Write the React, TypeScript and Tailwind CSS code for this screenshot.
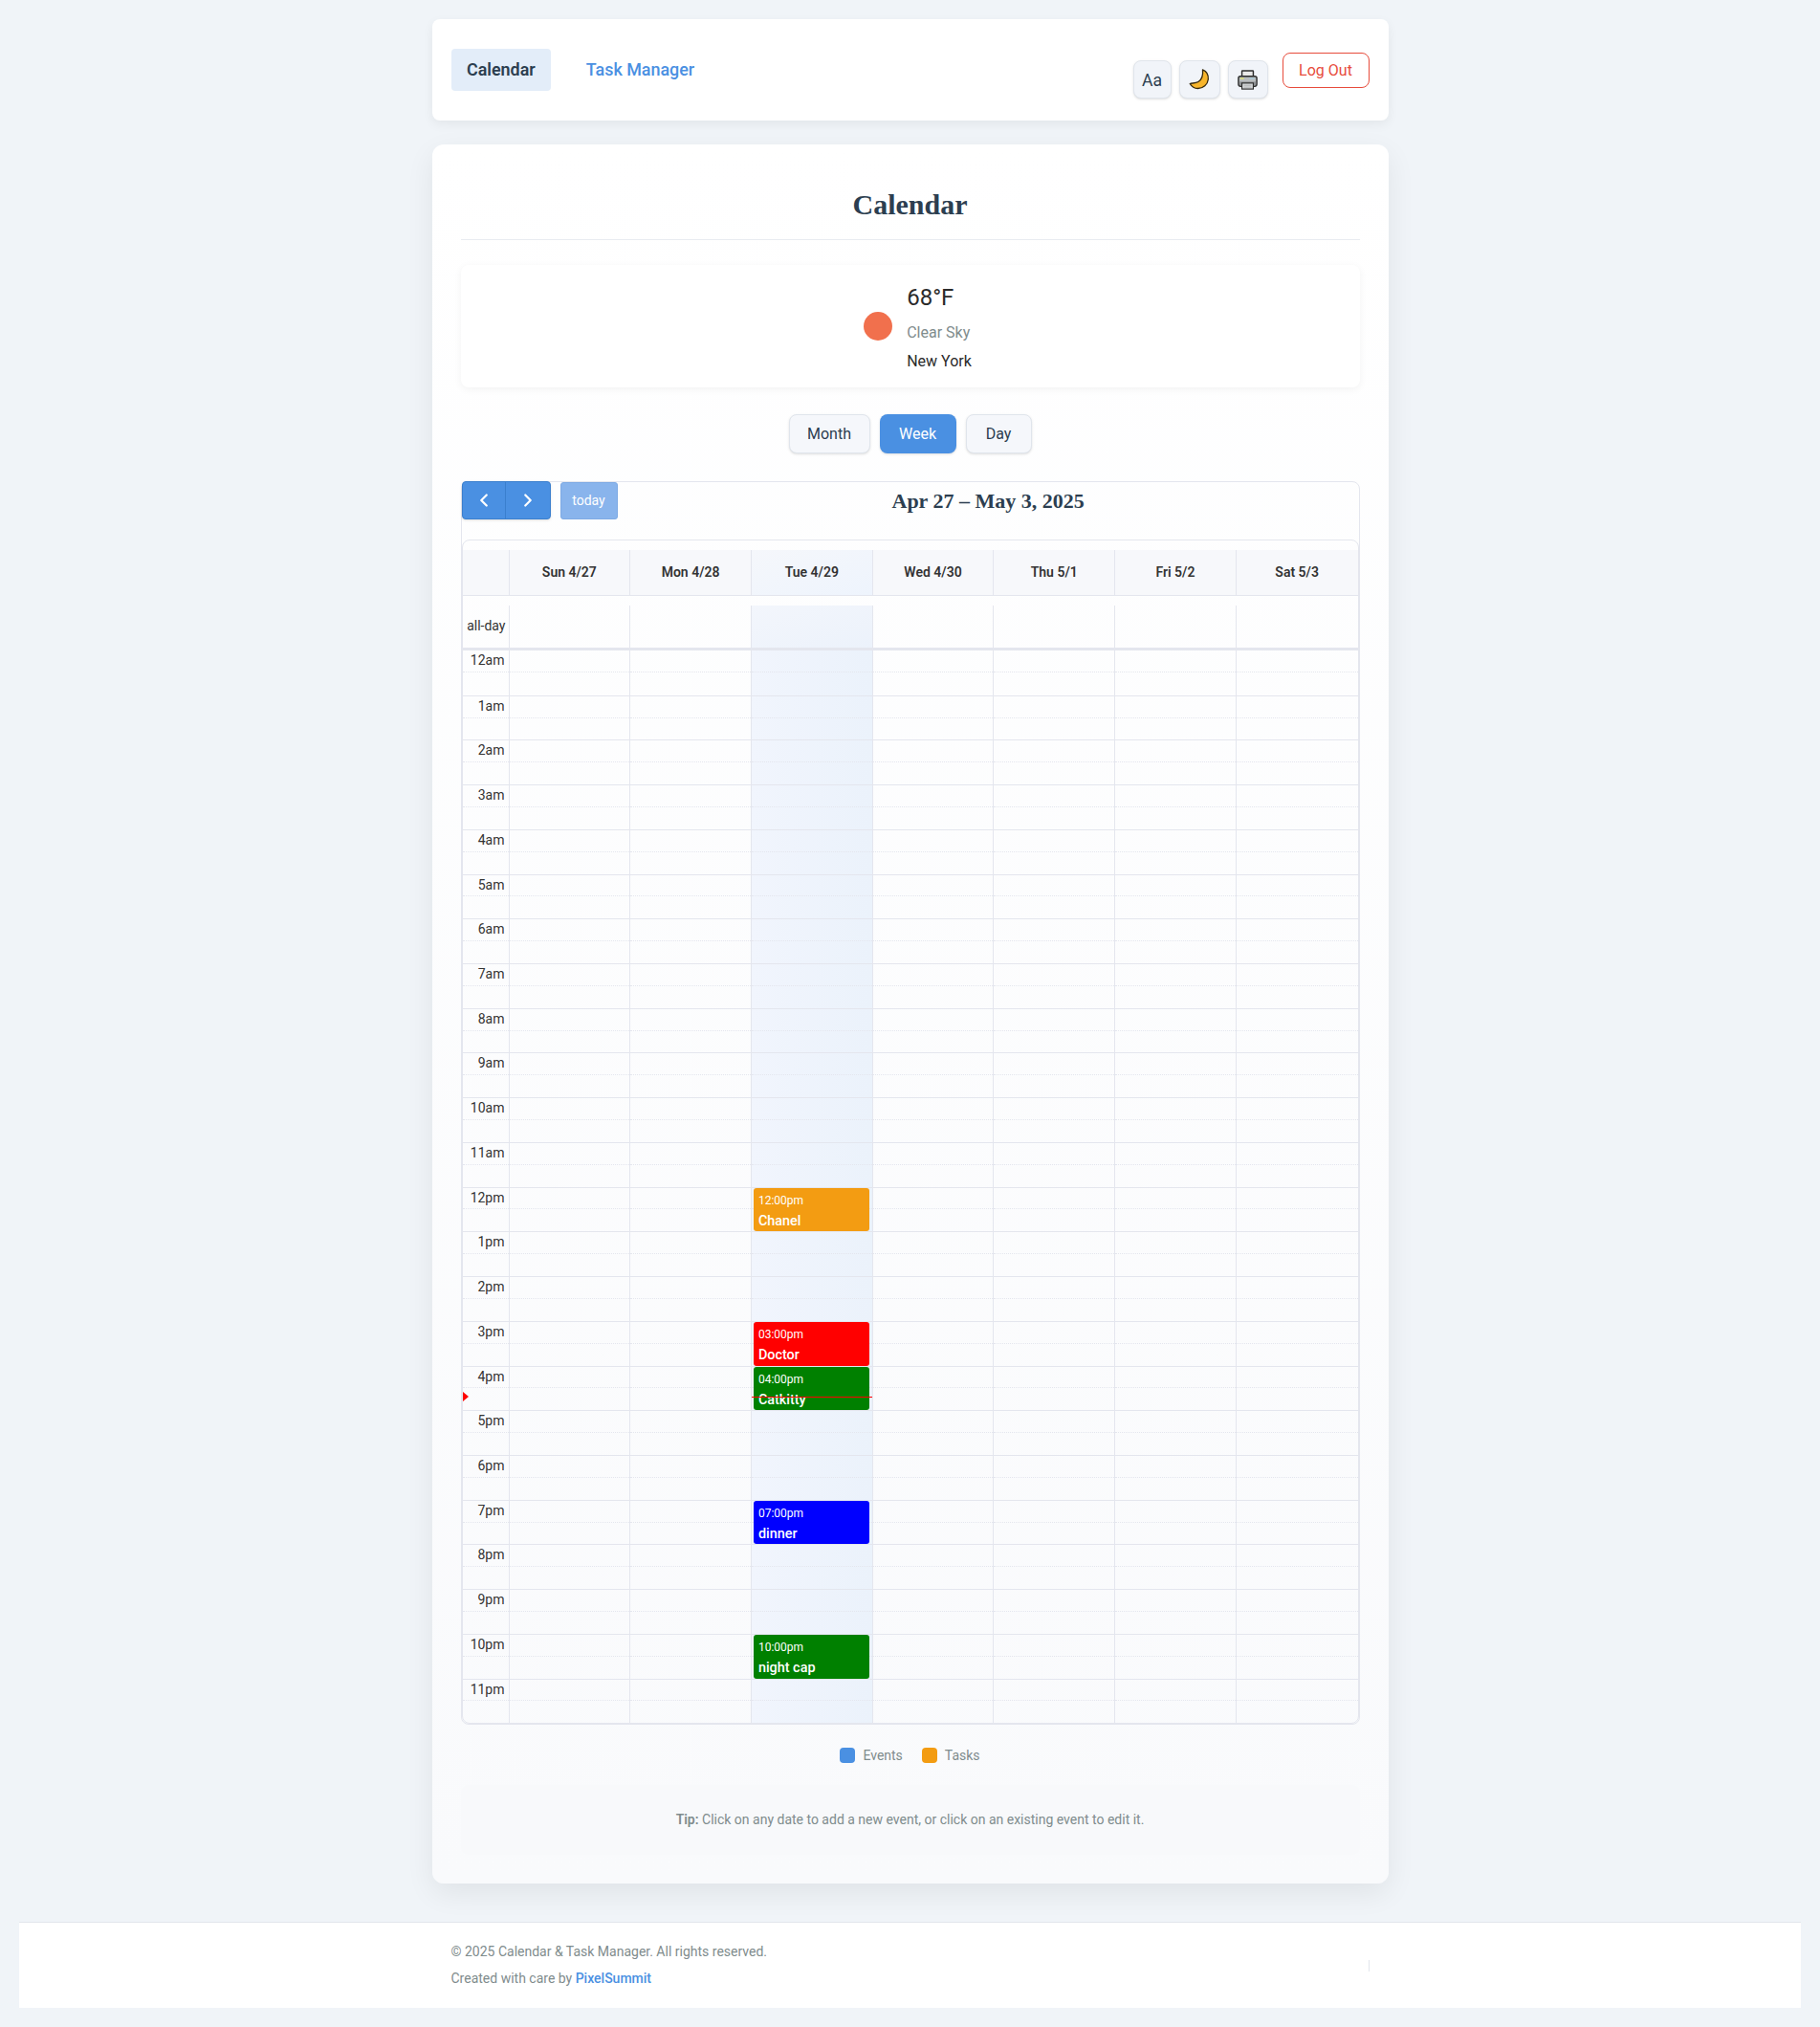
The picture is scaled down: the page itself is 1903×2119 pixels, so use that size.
import React from 'react';
import { ChevronLeft, ChevronRight } from 'lucide-react';

const days = ['Sun 4/27', 'Mon 4/28', 'Tue 4/29', 'Wed 4/30', 'Thu 5/1', 'Fri 5/2', 'Sat 5/3'];
const hours = ['12am', '1am', '2am', '3am', '4am', '5am', '6am', '7am', '8am', '9am', '10am', '11am', '12pm', '1pm', '2pm', '3pm', '4pm', '5pm', '6pm', '7pm', '8pm', '9pm', '10pm', '11pm'];

const events: Record<string, { time: string; title: string; color: string }> = {
  '12pm': { time: '12:00pm', title: 'Chanel', color: 'bg-[#f39c12]' },
  '3pm': { time: '03:00pm', title: 'Doctor', color: 'bg-[#ff0000]' },
  '4pm': { time: '04:00pm', title: 'Catkitty', color: 'bg-[#008000]' },
  '7pm': { time: '07:00pm', title: 'dinner', color: 'bg-[#0000ff]' },
  '10pm': { time: '10:00pm', title: 'night cap', color: 'bg-[#008000]' },
};

const MoonIcon = () => (
  <svg width="22" height="22" viewBox="0 0 22 22">
    <path d="M14.5 0.8 C18.5 2.5 20.8 6.5 20.3 11 C19.7 16.5 15 20.5 9.5 20.5 C6 20.5 3 18.5 1.2 15.5 C3.5 14.8 7 15.2 10 13.5 C13.5 11.5 15 6 14.5 0.8 Z" fill="#f7b52c" stroke="#35290f" strokeWidth="1.3" strokeLinejoin="round" />
  </svg>
);

const PrinterIcon = () => (
  <svg width="23" height="23" viewBox="0 0 24 24">
    <rect x="5.8" y="2" width="12.4" height="8" rx="0.5" fill="#e9e9e9" stroke="#2c2c2c" strokeWidth="1.5" />
    <rect x="2" y="8" width="20" height="11" rx="2.2" fill="#b9bdbf" stroke="#2c2c2c" strokeWidth="1.5" />
    <rect x="4" y="9.8" width="4" height="1.3" fill="#e7ea6a" />
    <rect x="14" y="9.8" width="5.5" height="1.3" fill="#a6cbdc" />
    <rect x="3" y="14" width="18" height="4" fill="#8e9194" />
    <rect x="5.8" y="15.5" width="12.4" height="6.5" fill="#d6d8d9" stroke="#2c2c2c" strokeWidth="1.2" />
    <path d="M8 18 H16 M8 20 H16" stroke="#a8aaac" strokeWidth="0.8" />
  </svg>
);

const gridLine = 'border-[#e4e6ee]';

const App = () => {
  return (
    <div className="min-h-[2119px] bg-[#f0f4f8] p-5 font-['Roboto',sans-serif] text-[#2c3e50]">
      <div className="mx-auto w-[1000px]">
        {/* Top nav */}
        <nav className="flex h-[106px] items-start justify-between rounded-lg bg-white px-5 pt-[31px] shadow-[0_4px_12px_rgba(0,0,0,0.06)]">
          <div className="flex items-center gap-[20px]">
            <a className="flex h-11 items-center rounded bg-[#e3edf9] px-[16.5px] text-[17.92px] font-semibold text-[#2c3e50]">Calendar</a>
            <a className="flex h-11 items-center px-[16.5px] text-[17.92px] font-medium text-[#4a90e2]">Task Manager</a>
          </div>
          <div className="flex items-start">
            <div className="mt-[12px] flex items-center gap-2">
              <button className="flex h-10 w-10 items-center justify-center rounded-lg border border-[#e0e5ec] bg-[#f1f4f9] pt-[2px] text-[17.6px] shadow-sm">Aa</button>
              <button className="flex h-10 w-[43px] items-center justify-center rounded-lg border border-[#e0e5ec] bg-[#f1f4f9] shadow-sm"><MoonIcon /></button>
              <button className="flex h-10 w-[42px] items-center justify-center rounded-lg border border-[#e0e5ec] bg-[#f1f4f9] shadow-sm"><PrinterIcon /></button>
            </div>
            <button className="ml-[15px] mt-[4px] flex h-[37px] w-[91px] items-center justify-center rounded-lg border border-[#e74c3c] bg-white text-[16px] text-[#e74c3c]">Log Out</button>
          </div>
        </nav>

        {/* Main card */}
        <main className="mt-[25px] h-[1818px] rounded-xl bg-gradient-to-b from-white to-[#f9fafc] px-[30px] pt-[40px] shadow-[0_10px_30px_rgba(0,0,0,0.07)]">
          <h1 className="h-[60px] border-b border-[#e8ebf0] text-center font-['Liberation_Serif',serif] text-[30px] font-bold leading-[46px] text-[#2c3e50]">Calendar</h1>

          {/* Weather */}
          <div className="mt-[26px] flex h-[128px] items-center justify-center gap-[15px] rounded-lg bg-white pl-4 shadow-[0_2px_8px_rgba(0,0,0,0.05)]">
            <div className="h-[30px] w-[30px] rounded-full bg-[#f1704d]"></div>
            <div className="flex flex-col">
              <span className="text-[24px] leading-[36px] text-[#2b2b2b]">68°F</span>
              <span className="mt-[4px] text-[16px] leading-[30px] text-[#7f8c8d]">Clear Sky</span>
              <span className="-mb-[3px] text-[16px] leading-[30px] text-[#2b2b2b]">New York</span>
            </div>
          </div>

          {/* View switch */}
          <div className="mt-7 flex justify-center gap-[10px]">
            <button className="h-[41px] w-[85px] rounded-lg border border-[#e0e5ec] bg-[#f5f7fb] text-[16px] shadow-sm">Month</button>
            <button className="h-[41px] w-[80px] rounded-lg bg-[#4a90e2] text-[16px] text-white shadow-sm">Week</button>
            <button className="h-[41px] w-[69px] rounded-lg border border-[#e0e5ec] bg-[#f5f7fb] text-[16px] shadow-sm">Day</button>
          </div>

          {/* Calendar */}
          <div className={`mt-[29px] h-[1300px] rounded-lg border ${gridLine}`}>
            <div className="relative flex h-[60px] items-start">
              <div className="-mt-px flex h-10 w-[93px] overflow-hidden rounded border border-[#3a7fce] bg-[#4a90e2] text-white shadow-sm">
                <div className="flex w-1/2 items-center justify-center border-r border-[#3a7fce]"><ChevronLeft size={22} strokeWidth={2.4} /></div>
                <div className="flex w-1/2 items-center justify-center"><ChevronRight size={22} strokeWidth={2.4} /></div>
              </div>
              <div className="ml-[10px] flex h-[39px] w-[60px] items-center justify-center rounded-[3px] border border-[#7eaae4] bg-[#89b4ec] text-[14px] text-white">today</div>
              <h2 className="ml-[287px] mt-[5px] font-['Liberation_Serif',serif] text-[22px] font-bold leading-[30px] text-[#2c3e50]">Apr 27 – May 3, 2025</h2>
            </div>

            <div className={`overflow-hidden rounded-lg border ${gridLine}`}>
              {/* Day heads */}
              <div className="pt-[10px]">
                <div className={`grid h-[48px] grid-cols-[49px_repeat(7,1fr)] border-b ${gridLine} bg-[#f7f8fb]`}>
                  <div className={`border-r ${gridLine}`}></div>
                  {days.map((d, i) => (
                    <div key={d} className={`flex items-center justify-center border-r last:border-r-0 ${gridLine} text-[14px] font-semibold text-[#333] ${i === 2 ? 'bg-gradient-to-br from-[#f5f7fb] to-[#eef4fd]' : ''}`}>{d}</div>
                  ))}
                </div>
              </div>

              {/* All-day row */}
              <div className={`border-b-[3px] pt-[10px] ${gridLine}`}>
                <div className="grid h-[44px] grid-cols-[49px_repeat(7,1fr)]">
                  <div className={`flex items-center justify-end border-r ${gridLine} pb-[2px] pr-[3px] text-[14px] text-[#333]`}>all-day</div>
                  {days.map((d, i) => (
                    <div key={d} className={`border-r last:border-r-0 ${gridLine} ${i === 2 ? 'bg-gradient-to-br from-[#f3f6fc] to-[#ecf2fb]' : ''}`}></div>
                  ))}
                </div>
              </div>

              {/* Time rows */}
              {hours.map((h, rowIdx) => (
                <div key={h} className={`grid h-[46.72px] grid-cols-[49px_repeat(7,1fr)] ${rowIdx > 0 ? `border-t ${gridLine}` : ''}`}>
                  <div className={`relative border-r ${gridLine}`}>
                    <div className="h-1/2 border-b border-dotted border-[#e4e6ee] pr-[4px] text-right text-[14px] leading-[20px] text-[#333]">{h}</div>
                    {h === '4pm' && (
                      <div className="absolute left-0 top-[26px] h-0 w-0 border-y-[5px] border-l-[6px] border-y-transparent border-l-[#ff0000]"></div>
                    )}
                  </div>
                  {days.map((d, i) => (
                    <div key={d} className={`relative border-r last:border-r-0 ${gridLine} ${i === 2 ? 'bg-gradient-to-r from-[#f1f5fd] to-[#ebf2fb]' : ''}`}>
                      <div className="h-1/2 border-b border-dotted border-[#e4e6ee]"></div>
                      {i === 2 && events[h] && (
                        <div className={`absolute bottom-0 left-[2px] right-[3px] top-0 z-10 rounded-[3px] ${events[h].color} px-[5px] text-white`}>
                          <div className="mt-[4.5px] text-[12px] leading-[18px]">{events[h].time}</div>
                          <div className="mt-[4px] text-[14.4px] font-medium leading-[18px]">{events[h].title}</div>
                        </div>
                      )}
                      {i === 2 && h === '4pm' && (
                        <div className="absolute inset-x-0 top-[31px] z-20 h-px bg-[#ff0000]"></div>
                      )}
                    </div>
                  ))}
                </div>
              ))}
            </div>
          </div>

          {/* Legend */}
          <div className="mt-[24px] flex h-4 items-center justify-center gap-5 text-[14px] text-[#7f8c8d]">
            <div className="flex items-center gap-2"><span className="h-4 w-4 rounded bg-[#4a90e2]"></span>Events</div>
            <div className="flex items-center gap-2"><span className="h-4 w-4 rounded bg-[#f39c12]"></span>Tasks</div>
          </div>

          {/* Tip */}
          <div className="mt-[23px] flex h-[73px] items-center justify-center rounded-lg bg-[#f8f9fb] text-[14px] text-[#7f8c8d]">
            <p><strong className="font-semibold">Tip:</strong> Click on any date to add a new event, or click on an existing event to edit it.</p>
          </div>
        </main>
      </div>

      {/* Footer */}
      <footer className="mt-10 h-[90px] border-t border-[#e2e6ec] bg-white">
        <div className="mx-auto flex h-full w-[1000px] items-center justify-between px-5 text-[14px] text-[#7f8c8d]">
          <div className="flex flex-col gap-[7px] leading-[21px]">
            <p>© 2025 Calendar &amp; Task Manager. All rights reserved.</p>
            <p>Created with care by <a className="font-medium text-[#4a90e2]">PixelSummit</a></p>
          </div>
          <span className="h-3 w-px bg-[#e2e6ec]"></span>
        </div>
      </footer>
    </div>
  );
};

export default App;
